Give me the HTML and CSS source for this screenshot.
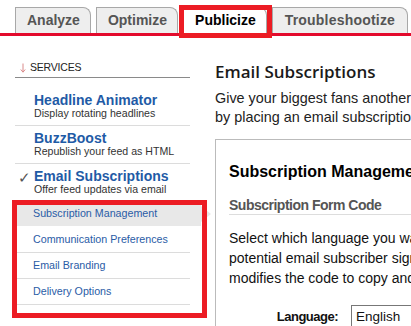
FILE: index.html
```html
<!DOCTYPE html>
<html>
<head>
<meta charset="utf-8">
<link rel="stylesheet" href="styles.css">
</head>
<body>
<nav class="tabs">
  <div class="tab">Analyze</div>
  <div class="tab">Optimize</div>
  <div class="tab active">Publicize</div>
  <div class="tab wide">Troubleshootize</div>
</nav>
<div class="annot annot-tab"></div>
<div class="layout">
  <aside class="sidebar">
    <div class="side-head">
      <svg class="down" width="6" height="10" viewBox="0 0 6 10"><path d="M3 0.5V9M0.8 6.5L3 9.2L5.2 6.5" fill="none" stroke="#d98a8a" stroke-width="1"/></svg>
      <span>SERVICES</span>
    </div>
    <ul class="services">
      <li class="svc">
        <span class="mark"></span>
        <div><div class="svc-title">Headline Animator</div><div class="svc-sub">Display rotating headlines</div></div>
      </li>
      <li class="svc">
        <span class="mark"></span>
        <div><div class="svc-title">BuzzBoost</div><div class="svc-sub">Republish your feed as HTML</div></div>
      </li>
      <li class="svc current">
        <span class="mark">✓</span>
        <div><div class="svc-title">Email Subscriptions</div><div class="svc-sub">Offer feed updates via email</div></div>
      </li>
    </ul>
    <ul class="submenu">
      <li class="active">Subscription Management</li>
      <li>Communication Preferences</li>
      <li>Email Branding</li>
      <li>Delivery Options</li>
    </ul>
  </aside>
  <main class="main">
    <h1>Email Subscriptions</h1>
    <p class="intro">Give your biggest fans another way to follow your feed:<br>by placing an email subscription form on your site.</p>
    <section class="panel">
      <h2>Subscription Management</h2>
      <h3>Subscription Form Code</h3>
      <p>Select which language you want your form to be in for<br>potential email subscriber sign-ups. This choice<br>modifies the code to copy and paste below.</p>
      <div class="lang-row">
        <label for="lang">Language:</label>
        <select id="lang"><option>English</option></select>
      </div>
    </section>
  </main>
</div>
<div class="annot annot-sub"></div>
</body>
</html>
```
FILE: styles.css
```css
* { box-sizing: border-box; }
html, body { margin: 0; padding: 0; }
body {
  font-family: "Liberation Sans", Arial, sans-serif;
  color: #222;
  background: #fff;
  width: 411px;
  height: 326px;
  overflow: hidden;
  position: relative;
}

/* Tabs */
.tabs {
  display: flex;
  gap: 5px;
  height: 36px;
  padding: 7px 0 0 15px;
  border-bottom: 3px solid #e30a2c;
}
.tab {
  flex: none;
  height: 26px;
  padding: 0 10px 0 11px;
  background: #eeeeee;
  border: 1px solid #a8a8a8;
  border-bottom: 0;
  border-top-right-radius: 8px;
  font-size: 14px;
  font-weight: bold;
  line-height: 25px;
  color: #555;
  white-space: nowrap;
}
.tab.wide { padding: 0 12px 0 12px; letter-spacing: 0.2px; }
.tab.active {
  background: #fff;
  color: #000;
  height: 29px;
  margin-bottom: -3px;
  position: relative;
}

/* Annotation boxes */
.annot {
  position: absolute;
  border: 5px solid #ec1c24;
  pointer-events: none;
}
.annot-tab { left: 179px; top: 5px; width: 93px; height: 33px; }
.annot-sub { left: 12px; top: 200px; width: 195px; height: 118px; }

/* Layout */
.layout {
  display: flex;
  padding-left: 15px;
}
.sidebar { width: 175px; flex: none; }
.main { flex: none; width: 420px; margin-left: 25px; }

/* Sidebar */
.side-head {
  margin-top: 24px;
  height: 18px;
  padding: 0 0 3px 5px;
  border-bottom: 1px solid #8a8a8a;
  display: flex;
  align-items: center;
  font-size: 10.5px;
  letter-spacing: -0.2px;
  line-height: 14px;
  color: #222;
}
.side-head .down { margin-right: 4px; margin-top: 1px; }
.services, .submenu { list-style: none; margin: 0; padding: 0; }
.services { margin-top: 10px; }
.svc {
  display: flex;
  padding: 5px 0 6px;
  border-bottom: 1px solid #dcdcdc;
}
.svc.current { border-bottom: 0; }
.svc .mark {
  flex: none;
  width: 19px;
  padding-left: 3px;
  font-size: 15px;
  line-height: 17px;
  color: #555;
}
.svc-title {
  font-size: 14px;
  font-weight: bold;
  line-height: 15px;
  color: #1f5ba6;
}
.svc-sub {
  font-size: 10.6px;
  line-height: 11px;
  color: #333;
}

.submenu li {
  height: 26px;
  padding-left: 18px;
  line-height: 25px;
  font-size: 10.7px;
  color: #2a5ca6;
  border-bottom: 1px solid #dcdcdc;
  white-space: nowrap;
}
.submenu li.active {
  background: #e8e8e8;
  border-bottom-color: #fff;
  margin-right: -11px;
  position: relative;
}
.submenu li.active::after {
  content: "";
  position: absolute;
  right: -10px;
  top: 5px;
  border-left: 10px solid #e8e8e8;
  border-top: 8px solid transparent;
  border-bottom: 8px solid transparent;
}

/* Main */
.main h1 {
  margin: 25px 0 0;
  font-family: "Open Sans", "Liberation Sans", sans-serif;
  font-weight: 600;
  font-size: 17px;
  line-height: 22px;
  color: #1a1a1a;
}
.intro {
  margin: 6px 0 0;
  font-size: 14.4px;
  line-height: 19px;
  color: #222;
  white-space: nowrap;
}
.panel {
  margin-top: 12px;
  border: 1px solid #bbb;
  padding: 22px 13px 20px;
}
.panel h2 {
  margin: 0;
  font-size: 16px;
  line-height: 20px;
  font-weight: bold;
  color: #000;
}
.panel h3 {
  margin: 14px 0 0;
  font-size: 14px;
  letter-spacing: -0.5px;
  line-height: 18px;
  font-weight: bold;
  color: #555;
  border-bottom: 1px solid #ddd;
}
.panel p {
  margin: 13px 0 0;
  font-size: 14px;
  line-height: 20px;
  color: #111;
  white-space: nowrap;
}
.lang-row {
  display: flex;
  align-items: center;
  gap: 13px;
  margin-top: 17px;
}
.lang-row label {
  width: 109px;
  text-align: right;
  font-size: 13px;
  font-weight: bold;
  letter-spacing: -0.5px;
  color: #111;
}
.lang-row select {
  -webkit-appearance: none;
  appearance: none;
  width: 140px;
  height: 22px;
  padding: 0 4px;
  border: 1px solid #777;
  border-radius: 0;
  background: #fff;
  font-family: "Liberation Sans", Arial, sans-serif;
  font-size: 13.5px;
  color: #111;
}
```
